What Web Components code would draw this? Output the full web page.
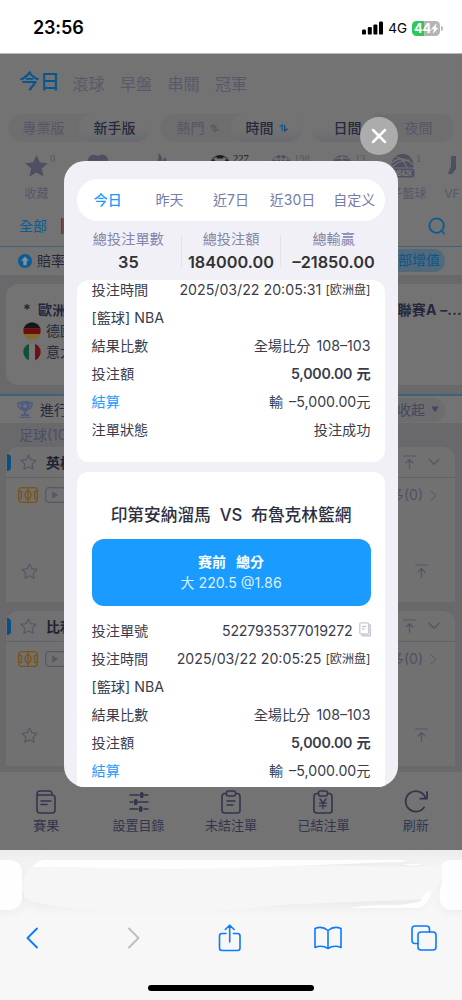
<!DOCTYPE html>
<html lang="zh-Hant">
<head>
<meta charset="utf-8">
<title>投注記錄</title>
<style>
html,body{margin:0;padding:0;background:#f7f7f7;overflow:hidden}
body{width:462px;height:1000px;font-family:Inter,"Noto Sans CJK TC","Noto Sans CJK SC",sans-serif;font-size:14px;line-height:20px}
</style>
</head>
<body>
<betting-screen></betting-screen>
<script>
const define = (name, html) => {
  const tpl = document.createElement('template');
  tpl.innerHTML = '<style>:host{display:block;box-sizing:border-box}*{box-sizing:border-box}</style>' + html;
  customElements.define(name, class extends HTMLElement {
    constructor() { super(); this.attachShadow({ mode: 'open' }).append(tpl.content.cloneNode(true)); }
  });
};

/* icons: [width, height, markup] */
const S = 'fill="none" stroke="currentColor" stroke-linecap="round" stroke-linejoin="round"';
const ICONS = {
  signal: [22, 14, '<g fill="currentColor"><rect x="0" y="8.6" width="4" height="5" rx="1.2"/><rect x="5.8" y="6" width="4" height="7.6" rx="1.2"/><rect x="11.4" y="3.4" width="4" height="10.2" rx="1.2"/><rect x="17" y=".6" width="4" height="13" rx="1.2"/></g>'],
  bolt: [8, 11, '<path fill="currentColor" d="M5.7.3 0 6.3h3L1.7 10.8 7.6 4.7H4.6z"/>'],
  close: [16, 16, `<path ${S} stroke-width="2.5" d="M2 2l12 12M14 2 2 14"/>`],
  swap: [9, 8, `<g fill="none" stroke-width="1.4"><path stroke="var(--a,#0c5f99)" d="M.5 3 3.2.9V7"/><path stroke="var(--b,#2f4460)" d="M5.6 1v6l3-2.2"/></g>`],
  star: [23, 22, '<path fill="currentColor" d="m11.500 0 3.300 7.300 8 .9-6 5.400 1.700 8-7-4-7 4 1.700-8-6-5.400 8-.9z"/>'],
  starline: [17, 16, `<path ${S} stroke-width="1.200" d="m8.500 1 2.300 4.700 5.200.7-3.800 3.700.9 5.200-4.600-2.500-4.600 2.500.9-5.200L1 6.400l5.200-.7z"/>`],
  heart: [20, 24, '<path fill="currentColor" d="M1 3Q4-1 10 2q6-3 9 1 3 5-2 10l-7 9-7-9Q-2 8 1 3z"/>'],
  flame: [20, 26, '<path fill="currentColor" d="M9 0c5 3 4 8 4 8l3-4c5 8 3 20-6 21C1 24-1 14 4 8l3 2Q11 5 9 0z"/>'],
  soccer: [22, 22, '<circle cx="11" cy="11" r="10.300" fill="#747474" stroke="#222" stroke-width="1"/><path fill="#1c1c1c" d="m7 1 4-1 4 1-1 2.500H8zM1 7l4-3 2 3-3 4zM21 7l-4-3-2 3 3 4zM8 9h6l1 5-4 3-4-3z"/>'],
  basket: [22, 22, '<circle cx="11" cy="11" r="11" fill="currentColor"/><path fill="none" stroke="#747474" stroke-width="1.300" d="M11 0v22M0 11h22M5 0q5 11 0 22M17 0q-5 11 0 22M3 4h16"/>'],
  ball: [20, 22, '<circle cx="10" cy="10" r="10" fill="currentColor"/><path fill="none" stroke="#747474" stroke-width="1.300" d="M10 0v20M3 4q7-3 14 0"/>'],
  nba: [24, 24, '<circle cx="11.500" cy="11" r="11" fill="currentColor"/><path fill="none" stroke="#747474" stroke-width="1.200" d="M1 9Q12 0 22 11M4 3q10 0 14 17M1 13q7-7 18-7"/><rect x="0" y="14" width="24" height="10" rx="3" fill="currentColor" stroke="#747474"/><text x="12" y="22" text-anchor="middle" font-size="7.500" font-weight="800" font-style="italic" fill="#7b7b7b" font-family="Inter" textLength="18" lengthAdjust="spacingAndGlyphs">NBA2K</text>'],
  runner: [10, 22, '<path fill="currentColor" d="M8 1a3 3 0 0 0-4 4v6l-3 8h4l4-5V1z"/>'],
  search: [18, 18, `<path ${S} stroke-width="1.700" d="M13.200 14.200A7.200 7.200 0 1 1 15 12M13.300 13l2.700 3.500"/>`],
  up: [14, 14, '<circle cx="7" cy="7" r="7" fill="#0b5c96"/><path fill="#858f98" d="m7 2.400 4 4.300H8.700v4.600H5.300V6.700H3z"/>'],
  de: [18, 18, '<clipPath id="c"><circle cx="9" cy="9" r="8.700"/></clipPath><g clip-path="url(#c)"><path fill="#171717" d="M0 0h18v6.300H0z"/><path fill="#6e0b0c" d="M0 6.300h18V12H0z"/><path fill="#83692b" d="M0 12h18v6H0z"/></g>'],
  it: [18, 18, '<clipPath id="c"><circle cx="9" cy="9" r="8.700"/></clipPath><g clip-path="url(#c)"><path fill="#0f5132" d="M0 0h6v18H0z"/><path fill="#777" d="M6 0h6v18H6z"/><path fill="#6e1016" d="M12 0h6v18h-6z"/></g>'],
  trophy: [16, 17, '<g fill="none" stroke="currentColor" stroke-width="1.600"><path d="M4 2H1q0 6 4 6M12 2h3q0 6-4 6"/></g><path fill="currentColor" d="M3.500 0h9v6q-1 4-3.500 4.500V13h3v2H4v-2h3v-2.500Q4.500 10 3.500 6zM2.500 15.800h11V17h-11z"/><path fill="#6b7284" d="m8 2 .9 1.900 2 .2-1.500 1.400.4 2L8 6.600l-1.800.9.400-2-1.500-1.400 2-.2z"/>'],
  field: [20, 16, `<g ${S} stroke-width="1.300"><rect x=".7" y=".7" width="18.600" height="14.600" rx="3"/><path d="M10 1v14M1 4.500h2.500v7H1M19 4.500h-2.500v7H19"/><ellipse cx="10" cy="8" rx="3" ry="4"/></g>`],
  play: [22, 16, `<rect x=".7" y=".7" width="20" height="14.600" rx="3" ${S} stroke-width="1.200"/><path fill="currentColor" d="m7.200 4.300 6 3.700-6 3.700z"/>`],
  top: [13, 14, `<g ${S} stroke-width="1.200"><path d="M.6 1h11.800M6.500 13.400V4.600M3 8l3.500-3.500L10 8"/></g>`],
  down: [12, 8, `<path ${S} stroke-width="1.500" d="m1 1.300 5 5 5-5"/>`],
  next: [7, 11, `<path ${S} stroke-width="1" d="m1 1 5 4.500-5 4.500"/>`],
  caret: [8, 7, '<path fill="currentColor" stroke="currentColor" stroke-linejoin="round" d="M1 1h6L4 5.500z"/>'],
  result: [20, 24, `<g ${S} stroke-width="1.600"><path d="M1 6.500V4q0-3 3-3h9q3 0 3 3M1 6.500q0-1.500 2-1.500h13q3 0 3 3v12q0 3-3 3H4q-3 0-3-3zM5 11h10M5 14.500h6"/></g>`],
  sliders: [20, 22, `<g ${S} stroke-width="1.500"><path d="M1 4h9M15 4h4M1 11h3M9 11h10M1 18h8M15 18h4"/></g><g fill="currentColor"><rect x="11" y="1" width="3.500" height="6" rx="1.500"/><rect x="5" y="8" width="3.500" height="6" rx="1.500"/><rect x="10" y="15" width="3.500" height="6" rx="1.500"/></g>`],
  clip: [20, 24, `<g ${S} stroke-width="1.600"><path d="M5 3.500H4q-3 0-3 3v14q0 2.500 3 2.500h12q3 0 3-2.500v-14q0-3-3-3h-1"/><rect x="5.500" y="1" width="9" height="5" rx="2"/><path d="M6 11h8M6 15h6"/></g>`],
  clipyen: [20, 24, `<g ${S} stroke-width="1.600"><path d="M5 3.500H4q-3 0-3 3v14q0 2.500 3 2.500h12q3 0 3-2.500v-14q0-3-3-3h-1"/><rect x="5.500" y="1" width="9" height="5" rx="2"/><path stroke-width="1.300" d="m7 9 3 4 3-4M6.500 13.200h7M6.500 15.800h7M10 13v5.500"/></g>`],
  refresh: [24, 24, `<g ${S} stroke-width="1.800"><path d="M20 17.500A10.200 10.200 0 1 1 21.500 8"/><path d="M23 2v6.700h-6.700"/></g>`],
  copy: [12, 15, `<g fill="none" stroke="#c8cad3" stroke-width="1.300"><path d="M9.800 3.200h1.500v10.500H3.500v-1.500" stroke-width="1.600"/><rect x=".8" y=".8" width="8.800" height="11.200" rx="1.300" fill="#fff"/><path d="M3 4.500h4.500M3 7h2.500"/></g>`],
  back: [12, 22, `<path ${S} stroke-width="1.900" d="M11 1.500 1.500 11l9.500 9.500"/>`],
  fwd: [12, 22, `<path ${S} stroke-width="1.900" d="M1 1.500 10.500 11 1 20.500"/>`],
  share: [24, 28, `<path ${S} stroke-width="1.600" d="M8 9.500H4Q1.500 9.500 1.500 12v12q0 2.500 2.500 2.500h15.500Q22 26.500 22 24V12q0-2.500-2.500-2.500h-4M11.700 18V1.500M7.300 5.500l4.400-4.300 4.400 4.300"/>`],
  book: [28, 24, `<path ${S} stroke-width="1.600" d="M14 4.500Q8-.5 1 2.500v19q7-3 13 1 6-4 13-1v-19Q20-.5 14 4.500zM14 4.500v18"/>`],
  tabs: [26, 26, `<g ${S} stroke-width="1.600"><path d="M7 18.500H4Q1 18.500 1 15.500V4q0-3 3-3h11.500q3 0 3 3v3"/><rect x="7" y="7" width="18" height="18" rx="3"/></g>`]
};
customElements.define('ui-icon', class extends HTMLElement {
  connectedCallback() {
    if (this.shadowRoot) return;
    const [w, h, m] = ICONS[this.getAttribute('name')];
    this.attachShadow({ mode: 'open' }).innerHTML =
      `<style>:host{display:block;flex:none;width:${w}px;height:${h}px}svg{display:block;overflow:visible}</style><svg width="${w}" height="${h}" viewBox="0 0 ${w} ${h}">${m}</svg>`;
  }
});

define('status-bar', `<style>
:host{height:54px;background:#fff;color:#000;display:flex;align-items:center;padding:3px 19px 0 33px;border-bottom:1px solid #b9b9b9}
b{font-size:18px;font-weight:600;letter-spacing:-.15px;flex:1}
span{font-size:13.500px;font-weight:400;margin:0 5px 0 4px}
.bat{width:28px;height:15px;border-radius:4.500px;background:linear-gradient(90deg,#30c759 44%,#b5b5b5 44%);color:#fff;font-weight:700;font-size:13px;letter-spacing:-.4px;line-height:15px;display:flex;align-items:center;padding-left:2px}
i{width:2px;height:5px;background:#bbb;border-radius:0 2px 2px 0;margin-left:1px}
</style><b>23:56</b><ui-icon name="signal"></ui-icon><span>4G</span><div class="bat">44<ui-icon name="bolt"></ui-icon></div><i></i>`);

define('top-tabs', `<style>
:host{height:54px;padding:1px 20px 0 19px;display:flex;align-items:center;font-size:16px;color:#585a69;gap:15.500px}
b{font-weight:500;font-size:20.500px;color:#09568c;margin-right:-3px}span{padding-top:4px}
</style><b>今日</b><span>滾球</span><span>早盤</span><span>串關</span><span>冠軍</span>`);

define('seg-toggle', `<style>
:host{width:142px;height:28px;border-radius:14px;background:#6e6e6f;display:grid;grid-template-columns:1fr 1fr;color:#555767}
::slotted(span){display:flex;align-items:center;justify-content:center;gap:5px;border-radius:14px}
::slotted(.on){color:#28293e;font-weight:500;background:linear-gradient(#737373 50%,#696b70)}
</style><slot></slot>`);

define('sport-item', `<style>
:host{width:61px;flex:none;color:#4e5062;position:relative;font-size:12px;text-align:center}
.i{height:28px;display:flex;align-items:center;justify-content:center}
.n{position:absolute;left:44px;top:0;font:10.500px/14px "Liberation Serif",serif;color:var(--n,#555767)}
.l{color:#55576a;height:24px;line-height:24px;margin-top:2px;white-space:nowrap;display:flex;justify-content:center}
</style><div class="i"><slot name="icon"></slot></div><div class="n"><slot name="count"></slot></div><div class="l"><slot></slot></div>`);

define('match-card', `<style>
:host{margin:0 7px 0 6px;background:#717171;border-radius:12px 12px 0 0;height:155px;color:#555766}
.h{height:31px;display:flex;align-items:center;border-bottom:1px solid #626266;padding-right:15px}
.bar{width:4px;height:17px;background:#084f83;border-radius:0 4px 4px 0;margin:0 9px 0 1px}
b{color:#202132;font-weight:700;margin-left:9px;flex:1;padding-top:1px}
.r{height:34px;display:flex;align-items:center;padding:0 18px 0 12px;gap:7px}
.r span{margin-left:auto;color:#4f5162}
.s{display:flex;justify-content:space-between;padding:35px 27px 0 15px;align-items:center;height:82px}
</style><div class="h"><div class="bar"></div><ui-icon name="starline"></ui-icon><b><slot></slot></b><ui-icon name="top" style="margin-right:12px"></ui-icon><ui-icon name="down"></ui-icon></div>
<div class="r"><ui-icon name="field" style="color:#7b5418"></ui-icon><ui-icon name="play"></ui-icon><span>多(0)</span><ui-icon name="next"></ui-icon></div>
<div class="s"><ui-icon name="starline"></ui-icon><ui-icon name="top"></ui-icon></div>`);

define('nav-item', `<style>
:host{display:flex;flex-direction:column;align-items:center;color:#33354d;font-size:13px}
div{height:24px;display:flex;align-items:center;margin-bottom:1px}
</style><div><slot name="icon"></slot></div><slot></slot>`);

define('sports-page', `<style>
:host{height:796px;background:#69696c;overflow:hidden;color:#26273a}
.w{background:#737373}
.seg{display:flex;padding:6px 8px 0;gap:10px;height:37px}
.sports{display:flex;height:64px;padding:7px 0 0 6px;overflow:hidden}
.filter{height:37px;display:flex;align-items:center;padding:0 16px 4px 19px;color:#0b5b94;border-bottom:1px solid #40607c;margin-top:1px}
.flag{width:16px;height:16px;margin-left:14px;background:repeating-linear-gradient(90deg,#314f55 0 1px,#6f4a3c 1px 3px)}
.filter ui-icon{margin-left:auto}
.odds{height:28px;display:flex;align-items:center;padding:0 17px 1px 18px;gap:5px}
.odds em{font-style:normal;margin-left:auto;background:#52697a;color:#08578e;border-radius:12px;height:23px;line-height:22px;padding:0 5px 0 10px}
.hot{margin:9px 0 0 6px;height:101px;border-radius:12px 0 0 12px;background:#737373;padding:15px 0 0 17px}
.hot p{margin:0;display:flex;align-items:center;height:21px;gap:5px}
.hot .t{font-weight:700;justify-content:space-between;white-space:pre;letter-spacing:.2px}
.live{margin-top:9px;height:29px;border-top:2px solid #3b617c;display:flex;align-items:center;padding:0 17px}
.live span{margin-left:7px;flex:1}
.live em{font-style:normal;display:flex;align-items:center;gap:6px;background:#6d6d6f;border-radius:12px;padding:0 6px 0 14px;height:24px;color:#45475a}
.cat{height:24px;padding:2px 20px 0 19px;color:#4b4e66}
.nav{height:80px;display:grid;grid-template-columns:repeat(5,1fr);padding-top:18px;margin-top:6px}
</style>
<div class="w"><top-tabs></top-tabs>
<div class="seg"><seg-toggle><span>專業版</span><span class="on">新手版</span></seg-toggle><seg-toggle><span style="padding-left:4px">熱門<ui-icon name="swap" style="--a:#555767;--b:#555767"></ui-icon></span><span class="on">時間<ui-icon name="swap"></ui-icon></span></seg-toggle><seg-toggle><span class="on">日間</span><span>夜間</span></seg-toggle></div>
<div class="sports">
<sport-item><ui-icon slot="icon" name="star"></ui-icon><span slot="count">0</span>收藏</sport-item>
<sport-item><ui-icon slot="icon" name="heart"></ui-icon></sport-item>
<sport-item><ui-icon slot="icon" name="flame"></ui-icon></sport-item>
<sport-item style="--n:#1b1b1b"><ui-icon slot="icon" name="soccer"></ui-icon><span slot="count">227</span></sport-item>
<sport-item><ui-icon slot="icon" name="basket"></ui-icon><span slot="count">198</span></sport-item>
<sport-item><ui-icon slot="icon" name="ball"></ui-icon><span slot="count">13</span></sport-item>
<sport-item><ui-icon slot="icon" name="nba"></ui-icon><span slot="count">1</span>電子籃球</sport-item>
<sport-item style="width:30px;padding-left:8px"><ui-icon slot="icon" name="runner"></ui-icon>VF</sport-item></div>
<div class="filter">全部<div class="flag"></div><ui-icon name="search"></ui-icon></div>
<div class="odds"><ui-icon name="up"></ui-icon>賠率<em>部增值</em></div></div>
<div class="hot"><p class="t"><span>*  歐洲</span><span>聯賽A –...</span></p><p><ui-icon name="de"></ui-icon>德國</p><p><ui-icon name="it"></ui-icon>意大</p></div>
<div class="live w"><ui-icon name="trophy" style="color:#505b80"></ui-icon><span>進行</span><em>收起<ui-icon name="caret"></ui-icon></em></div>
<div class="cat">足球(10</div>
<match-card>英格</match-card><match-card style="margin-top:9px">比利</match-card>
<div class="nav w"><nav-item><ui-icon slot="icon" name="result"></ui-icon>賽果</nav-item><nav-item><ui-icon slot="icon" name="sliders"></ui-icon>設置目錄</nav-item><nav-item><ui-icon slot="icon" name="clip"></ui-icon>未結注單</nav-item><nav-item><ui-icon slot="icon" name="clipyen"></ui-icon>已結注單</nav-item><nav-item><ui-icon slot="icon" name="refresh"></ui-icon>刷新</nav-item></div>`);

define('safari-bar', `<style>
:host{height:150px;background:#f7f7f7}
.strip{display:block;height:70px}
.tools{display:flex;align-items:center;justify-content:space-between;padding:0 25px 0 26px;height:35px;color:#0a7aff}
.home{width:166px;height:5.500px;border-radius:3px;background:#000;margin:30px auto 0}
</style>
<svg class="strip" width="462" height="70" viewBox="0 0 462 70"><defs><linearGradient id="g" x2="0" y2="1"><stop stop-color="#ececec"/><stop offset=".45" stop-color="#f2f2f2"/><stop offset="1" stop-color="#f7f7f7"/></linearGradient><filter id="b" x="-20%" y="-20%" width="140%" height="150%"><feGaussianBlur stdDeviation="5"/></filter></defs>
<rect width="462" height="70" fill="#f7f7f7"/><rect width="462" height="22" fill="url(#g)"/>
<g filter="url(#b)" fill="#ebebeb"><rect x="-14" y="12" width="37" height="50" rx="12"/><rect x="26" y="14" width="402" height="44" rx="14"/><rect x="440" y="12" width="40" height="50" rx="12"/></g>
<rect x="-20" y="10" width="42" height="50" rx="12" fill="#fefefe"/><path d="M462 10h-10q-12 0-12 10 3 10 0 20-3 20 12 20h10z" fill="#fefefe"/>
<path fill="#f6f6f6" d="M32 17Q20 24 23 41q2 10 15 12 50 10 120 10 80-2 120-8l150-6q14-14 14-32L40 12z"/>
<path fill="#fefefe" d="M32 17q6-7 12-7h361q4 2-12 2-55 2-130 5-90 3-160 1-48-2-71-1zM404 14h18q-8 3-18 0zM350 58h66q12 0 15-17-8 2-10 10-14 5-40 4-22 1-31 3z"/></svg>
<div class="tools"><ui-icon name="back"></ui-icon><ui-icon name="fwd" style="color:#bdbdbf;margin-left:15px"></ui-icon><ui-icon name="share" style="margin-left:4px"></ui-icon><ui-icon name="book" style="margin-left:-3px"></ui-icon><ui-icon name="tabs" style="margin-left:-5px"></ui-icon></div>
<div class="home"></div>`);

define('info-row', `<style>
:host{height:27.950px;display:flex;align-items:center;justify-content:space-between;font-size:14.200px;color:#3a3c4b;white-space:pre}
div{display:flex;align-items:center}
</style><div><slot name="label"></slot></div><div><slot></slot></div>`);

define('date-tabs', `<style>
:host{height:42px;border-radius:21px;background:#fff;display:grid;grid-template-columns:repeat(5,1fr);align-items:center;text-align:center;color:#777ba5;font-size:14px}
.on{color:#199bff;font-weight:500}
</style><span class="on">今日</span><span>昨天</span><span>近7日</span><span style="font-size:14px">近30日</span><span>自定义</span>`);

define('stat-cell', `<style>
:host{text-align:center;color:#8286ac;font-size:14.200px;line-height:22px;width:103px;white-space:nowrap}
b{display:block;color:#333;font-weight:600;font-size:16.300px;line-height:24px}
</style><slot name="label"></slot><b><slot></slot></b>`);

define('bet-dialog', `<style>
:host{position:absolute;left:64px;top:161px;width:334px;height:626px;border-radius:21px;background:#f1f0f6;overflow:hidden;padding:18px 13px 0;box-shadow:0 0 1px #888}
.stats{display:flex;justify-content:center;height:59px;padding-top:7px;position:relative}
.stats i{position:absolute;top:14px;height:32px;width:1px;background:#e3e3ec}
.list{height:507px;overflow:hidden;border-radius:12px 12px 0 0}
.card{background:#fff;border-radius:12px;padding:0 14.500px;height:182px;overflow:hidden;margin-bottom:10px}
.card>:first-child{margin-top:-4px}
.two{height:330px}
.two h2{margin:0!important;padding-top:31px;height:67px;font-size:16.700px;line-height:24px;font-weight:500;text-align:center;color:#2e3040;white-space:pre}
.pick{height:67px;border-radius:12px;background:#1a9bff;color:#fff;text-align:center;padding-top:12px;line-height:21px;margin-bottom:11.500px;white-space:pre}
.pick b{font-weight:600;display:block;word-spacing:1.500px}.pick span{color:#d9efff;font-size:14.200px}
.blue{color:#1a9bff}small{font-size:12.100px}b{font-weight:600}
.d{letter-spacing:0}.id{letter-spacing:-.2px}.m{letter-spacing:-.25px;word-spacing:1px}.sc{word-spacing:2px}
</style>
<date-tabs></date-tabs>
<div class="stats"><stat-cell><span slot="label">總投注單數</span>35</stat-cell><stat-cell><span slot="label">總投注額</span>184000.00</stat-cell><stat-cell><span slot="label">總輸贏</span>–21850.00</stat-cell><i style="left:104px"></i><i style="left:203px"></i></div>
<div class="list"><div class="card">
<info-row><span slot="label">投注時間</span><span class="d">2025/03/22 20:05:31 </span><small>[欧洲盘]</small></info-row>
<info-row><span slot="label">[籃球] NBA</span></info-row>
<info-row><span slot="label">結果比數</span><span class="sc">全場比分 108–103</span></info-row>
<info-row><span slot="label">投注額</span><b class="m">5,000.00 元</b></info-row>
<info-row><span slot="label" class="blue">結算</span><span class="sc">輸 –5,000.00元</span></info-row>
<info-row><span slot="label">注單狀態</span>投注成功</info-row></div>
<div class="card two"><h2>印第安納溜馬  VS  布魯克林籃網</h2>
<div class="pick"><b>赛前  總分</b><span>大 220.5 @1.86</span></div>
<info-row><span slot="label">投注單號</span><span class="id">5227935377019272</span><ui-icon name="copy" style="margin:-4px 0 0 6px"></ui-icon></info-row>
<info-row><span slot="label">投注時間</span><span class="d">2025/03/22 20:05:25 </span><small>[欧洲盘]</small></info-row>
<info-row><span slot="label">[籃球] NBA</span></info-row>
<info-row><span slot="label">結果比數</span><span class="sc">全場比分 108–103</span></info-row>
<info-row><span slot="label">投注額</span><b class="m">5,000.00 元</b></info-row>
<info-row><span slot="label" class="blue">結算</span><span class="sc">輸 –5,000.00元</span></info-row></div></div>`);

define('close-button', `<style>
:host{position:absolute;left:360px;top:117px;width:38px;height:38px;border-radius:50%;background:#acacac;color:#fff;display:flex;align-items:center;justify-content:center}
</style><ui-icon name="close"></ui-icon>`);

define('betting-screen', `<style>:host{position:relative;width:462px;height:1000px;overflow:hidden}</style>
<status-bar></status-bar><sports-page></sports-page><safari-bar></safari-bar><bet-dialog></bet-dialog><close-button></close-button>`);
</script>
</body>
</html>
